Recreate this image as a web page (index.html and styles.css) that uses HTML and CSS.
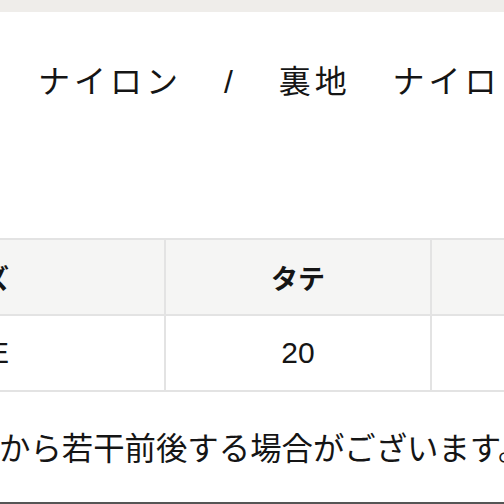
FILE: index.html
```html
<!DOCTYPE html>
<html lang="ja">
<head>
<meta charset="utf-8">
<link rel="stylesheet" href="styles.css">
</head>
<body>
<div class="page">
  <div class="topband"></div>
  <p class="material">ナイロン / 裏地 ナイロン</p>
  <div class="table-wrap">
    <table class="size-table">
      <tr class="head">
        <th class="c1">サイズ</th>
        <th class="c2">タテ</th>
        <th class="c3">ヨコ</th>
      </tr>
      <tr>
        <td class="c1">FREE</td>
        <td class="c2">20</td>
        <td class="c3">30</td>
      </tr>
    </table>
  </div>
  <p class="note">から若干前後する場合がございます。</p>
  <div class="bottom-line"></div>
</div>
</body>
</html>
```
FILE: styles.css
```css
html, body {
  margin: 0;
  padding: 0;
  background: #ffffff;
}
.page {
  width: 504px;
  height: 504px;
  overflow: hidden;
  font-family: "Liberation Sans", "Noto Sans CJK JP", sans-serif;
  color: #151515;
  display: flex;
  flex-direction: column;
}
.topband {
  height: 12px;
  background: #efedea;
  flex: none;
}
.material {
  margin: 48px 0 0 38px;
  font-size: 32px;
  line-height: 44px;
  letter-spacing: 4px;
  word-spacing: 29px;
  white-space: nowrap;
  flex: none;
}
.table-wrap {
  margin: 134px 0 0 -228px;
  flex: none;
}
.size-table {
  border-collapse: collapse;
  table-layout: fixed;
  width: 922px;
}
.size-table th,
.size-table td {
  border: 2px solid #e3e3e3;
  height: 74px;
  padding: 0;
  text-align: center;
  white-space: nowrap;
}
.size-table th {
  background: #f5f5f4;
  font-weight: bold;
  font-size: 27px;
}
.size-table td {
  background: #ffffff;
  font-weight: normal;
  font-size: 30px;
}
.c1 { width: 390px; }
.c2 { width: 264px; }
.c3 { width: 264px; }
.note {
  margin: 36px 0 0 -1px;
  font-size: 31.4px;
  line-height: 44px;
  white-space: nowrap;
  flex: none;
}
.bottom-line {
  margin-top: auto;
  height: 2px;
  background: #555555;
  flex: none;
}
```
